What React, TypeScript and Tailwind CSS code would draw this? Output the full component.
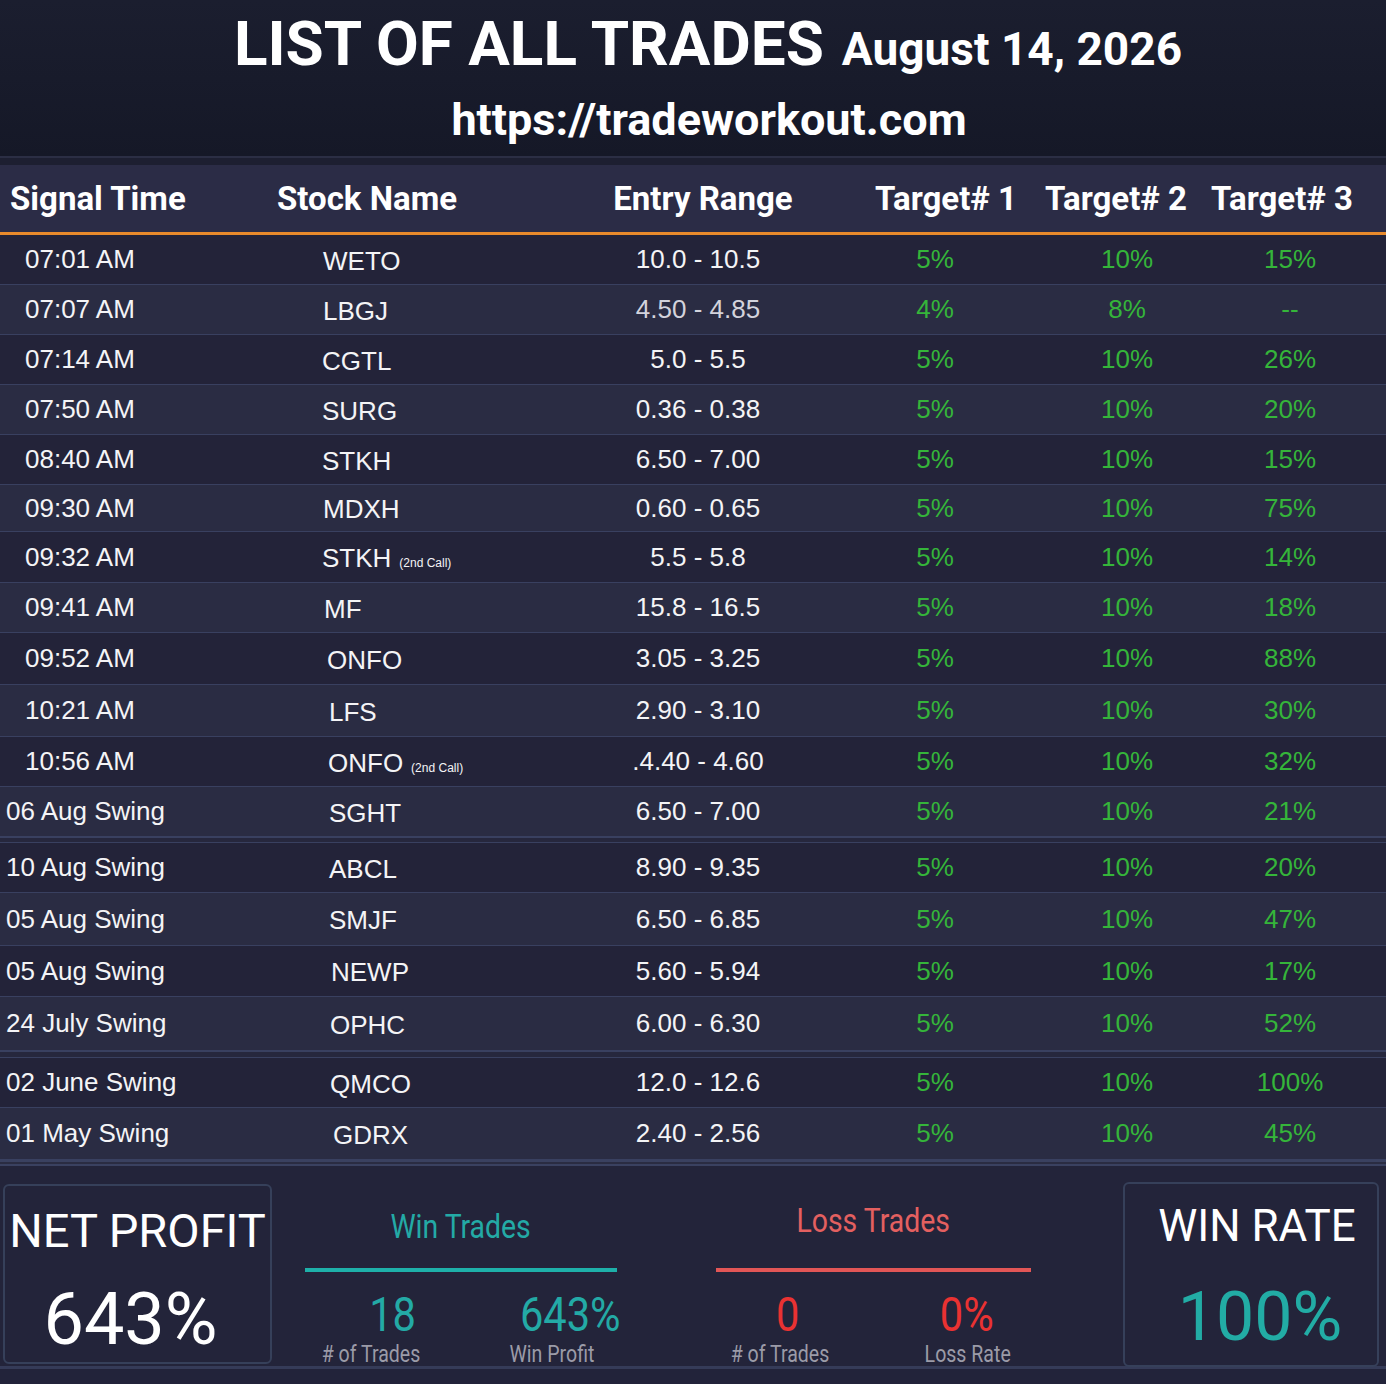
import React from "react";

type Trade = {
  time: string;
  name: string;
  call?: boolean;
  range: string;
  t1: string;
  t2: string;
  t3: string;
  h: string;
  nameCls: string;
  gapBefore?: string;
};

const trades: Trade[] = [
  { time: "07:01 AM", name: "WETO", range: "10.0 - 10.5", t1: "5%", t2: "10%", t3: "15%", h: "h-[50px]", nameCls: "pl-[1px]" },
  { time: "07:07 AM", name: "LBGJ", range: "4.50 - 4.85", t1: "4%", t2: "8%", t3: "--", h: "h-[50px]", nameCls: "pl-[1px]" },
  { time: "07:14 AM", name: "CGTL", range: "5.0 - 5.5", t1: "5%", t2: "10%", t3: "26%", h: "h-[50px]", nameCls: "pl-0" },
  { time: "07:50 AM", name: "SURG", range: "0.36 - 0.38", t1: "5%", t2: "10%", t3: "20%", h: "h-[50px]", nameCls: "pl-0" },
  { time: "08:40 AM", name: "STKH", range: "6.50 - 7.00", t1: "5%", t2: "10%", t3: "15%", h: "h-[50px]", nameCls: "pl-0" },
  { time: "09:30 AM", name: "MDXH", range: "0.60 - 0.65", t1: "5%", t2: "10%", t3: "75%", h: "h-[47px]", nameCls: "pl-[1px]" },
  { time: "09:32 AM", name: "STKH", call: true, range: "5.5 - 5.8", t1: "5%", t2: "10%", t3: "14%", h: "h-[51px]", nameCls: "pl-0" },
  { time: "09:41 AM", name: "MF", range: "15.8 - 16.5", t1: "5%", t2: "10%", t3: "18%", h: "h-[50px]", nameCls: "pl-[2px]" },
  { time: "09:52 AM", name: "ONFO", range: "3.05 - 3.25", t1: "5%", t2: "10%", t3: "88%", h: "h-[52px]", nameCls: "pl-[5px]" },
  { time: "10:21 AM", name: "LFS", range: "2.90 - 3.10", t1: "5%", t2: "10%", t3: "30%", h: "h-[52px]", nameCls: "pl-[7px]" },
  { time: "10:56 AM", name: "ONFO", call: true, range: ".4.40 - 4.60", t1: "5%", t2: "10%", t3: "32%", h: "h-[50px]", nameCls: "pl-[6px]" },
  { time: "06 Aug Swing", name: "SGHT", range: "6.50 - 7.00", t1: "5%", t2: "10%", t3: "21%", h: "h-[50px]", nameCls: "pl-[7px]" },
  { time: "10 Aug Swing", name: "ABCL", range: "8.90 - 9.35", t1: "5%", t2: "10%", t3: "20%", h: "h-[50px]", nameCls: "pl-[7px]", gapBefore: "h-[6px]" },
  { time: "05 Aug Swing", name: "SMJF", range: "6.50 - 6.85", t1: "5%", t2: "10%", t3: "47%", h: "h-[53px]", nameCls: "pl-[7px]" },
  { time: "05 Aug Swing", name: "NEWP", range: "5.60 - 5.94", t1: "5%", t2: "10%", t3: "17%", h: "h-[51px]", nameCls: "pl-[9px]" },
  { time: "24 July Swing", name: "OPHC", range: "6.00 - 6.30", t1: "5%", t2: "10%", t3: "52%", h: "h-[54px]", nameCls: "pl-[8px]" },
  { time: "02 June Swing", name: "QMCO", range: "12.0 - 12.6", t1: "5%", t2: "10%", t3: "100%", h: "h-[50px]", nameCls: "pl-[8px]", gapBefore: "h-[7px]" },
  { time: "01 May Swing", name: "GDRX", range: "2.40 - 2.56", t1: "5%", t2: "10%", t3: "45%", h: "h-[52px]", nameCls: "pl-[11px]" },
];

const TradeRow = ({ t, i }: { t: Trade; i: number }) => {
  const swing = t.time.includes("Swing");
  return (
    <>
      {t.gapBefore && (
        <div className={`${t.gapBefore} border-y border-[#394060] bg-[#26273d]`} />
      )}
      <div
        className={`${t.h} flex items-center border-b border-[#394060] text-[26px] text-[#f4f4f6] ${
          i % 2 === 0 ? "bg-[#232339]" : "bg-[#2a2c43]"
        }`}
      >
        <div className={`w-[322px] shrink-0 whitespace-nowrap ${swing ? "pl-[6px]" : "pl-[25px]"}`}>
          {t.time}
        </div>
        <div className={`w-[250px] shrink-0 whitespace-nowrap pt-[3px] ${t.nameCls}`}>
          {t.name}
          {t.call && <span className="ml-[8px] text-[12px]">(2nd Call)</span>}
        </div>
        <div className={`w-[252px] shrink-0 text-center whitespace-nowrap ${i === 1 ? "text-[#d3d3dc]" : ""}`}>
          {t.range}
        </div>
        <div className="w-[222px] shrink-0 text-center text-[#35b53a]">{t.t1}</div>
        <div className="w-[162px] shrink-0 text-center text-[#35b53a]">{t.t2}</div>
        <div className="w-[154px] shrink-0 pl-[10px] text-center text-[#35b53a]">{t.t3}</div>
      </div>
    </>
  );
};

const StatPair = ({
  value,
  label,
  color,
  w,
  shift,
}: {
  value: string;
  label: string;
  color: string;
  w: string;
  shift: string;
}) => (
  <div className={`${w} flex shrink-0 flex-col items-center`}>
    <div className={`${color} ${shift} inline-block scale-x-[0.85] text-[49px] leading-[44px] whitespace-nowrap`}>
      {value}
    </div>
    <div className="mt-[6px] inline-block scale-x-[0.85] text-[23px] leading-none whitespace-nowrap text-[#9b9ba8]">
      {label}
    </div>
  </div>
);

export default function App() {
  return (
    <div className="w-[1386px] h-[1384px] overflow-hidden bg-[#23243a] font-['Liberation_Sans',Arial,sans-serif]">
      <header className="h-[156px] bg-gradient-to-b from-[#1b1e2f] to-[#151827] pt-[9px] font-['Roboto',sans-serif] font-bold text-white">
        <div className="flex items-baseline justify-center pl-[30px] leading-[70px]">
          <span className="text-[62px]">LIST OF ALL TRADES</span>
          <span className="ml-[18px] text-[46px]">August 14, 2026</span>
        </div>
        <div className="mt-[8px] pl-[32px] text-center text-[45px] leading-[56px]">
          https://tradeworkout.com
        </div>
      </header>
      <div className="h-[2px] bg-[#2b2e44]" />
      <div className="h-[7px] bg-[#1d1f31]" />

      <div className="flex h-[67px] items-center bg-[#2b2c46] font-['Roboto',sans-serif] text-[33px] font-bold text-white whitespace-nowrap">
        <div className="w-[277px] shrink-0 pl-[10px]">Signal Time</div>
        <div className="w-[304px] shrink-0">Stock Name</div>
        <div className="flex w-[244px] shrink-0 justify-center">Entry Range</div>
        <div className="flex w-[242px] shrink-0 justify-center">Target# 1</div>
        <div className="flex w-[98px] shrink-0 justify-center">Target# 2</div>
        <div className="flex w-[234px] shrink-0 justify-center">Target# 3</div>
      </div>
      <div className="h-[3px] bg-[#e88a2c]" />

      {trades.map((t, i) => (
        <TradeRow key={i} t={t} i={i} />
      ))}

      <div className="h-[6px] border-y-2 border-[#3a4160] bg-[#2a2c42]" />

      <div className="flex h-[200px] items-start">
        <div className="ml-[3px] mt-[18px] h-[180px] w-[269px] shrink-0 rounded-md border-2 border-[#36405a] pt-[21px] text-center font-['Roboto',sans-serif] text-white">
          <div className="text-[47px] leading-none">NET PROFIT</div>
          <div className="mt-[30px] pr-[14px] text-[72px] leading-none">643%</div>
        </div>

        <div className="ml-[33px] w-[312px] shrink-0 pt-[44px] font-['Roboto',sans-serif]">
          <div className="text-center text-[33px] leading-none text-[#23aaa6]">
            <span className="inline-block scale-x-[0.86]">Win Trades</span>
          </div>
          <div className="mt-[25px] h-[4px] bg-[#1eb0a9]" />
          <div className="mt-[21px] flex">
            <StatPair value="18" label="# of Trades" color="text-[#23aaa6]" w="w-[132px]" shift="ml-[44px]" />
            <div className="w-[35px] shrink-0" />
            <StatPair value="643%" label="Win Profit" color="text-[#23aaa6]" w="w-[160px]" shift="ml-[36px]" />
          </div>
        </div>

        <div className="ml-[99px] w-[315px] shrink-0 pt-[38px] font-['Roboto',sans-serif]">
          <div className="text-center text-[33px] leading-none text-[#e46060]">
            <span className="inline-block scale-x-[0.86]">Loss Trades</span>
          </div>
          <div className="mt-[31px] h-[4px] bg-[#e25656]" />
          <div className="mt-[21px] flex">
            <StatPair value="0" label="# of Trades" color="text-[#ea3232]" w="w-[128px]" shift="ml-[16px]" />
            <div className="w-[44px] shrink-0" />
            <StatPair value="0%" label="Loss Rate" color="text-[#ea3232]" w="w-[160px]" shift="ml-[-2px]" />
          </div>
        </div>

        <div className="ml-[92px] mt-[16px] h-[185px] w-[256px] shrink-0 rounded-md border-2 border-[#36405a] pl-[12px] pt-[20px] text-center font-['Roboto',sans-serif]">
          <div className="text-[44px] leading-none text-white">WIN RATE</div>
          <div className="mt-[35px] pl-[6px] text-[68px] leading-none text-[#22aca5]">100%</div>
        </div>
      </div>

      <div className="h-[3px] bg-[#353b58]" />
      <div className="h-[15px] bg-[#22233a]" />
    </div>
  );
}
